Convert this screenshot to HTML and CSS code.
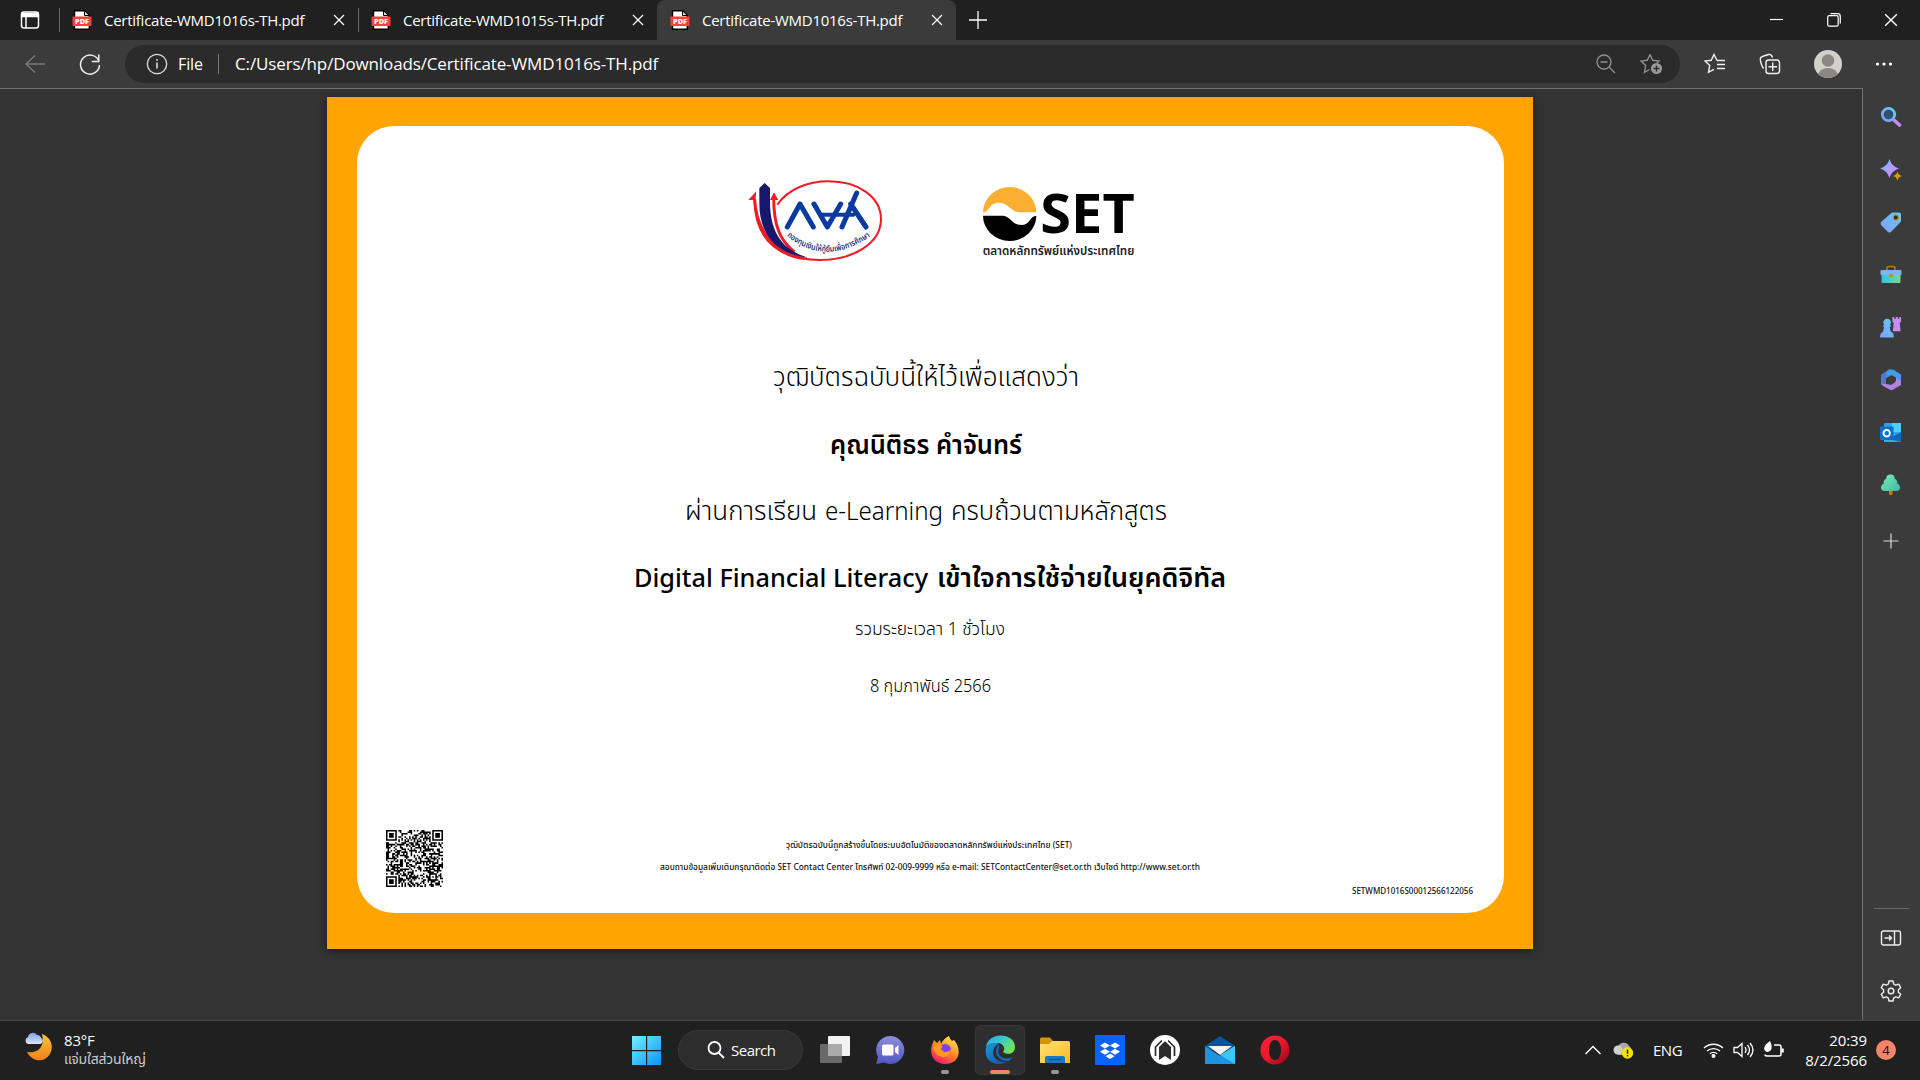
FILE: index.html
```html
<!DOCTYPE html>
<html lang="th">
<head>
<meta charset="utf-8">
<title>Certificate-WMD1016s-TH.pdf</title>
<link rel="stylesheet" href="styles.css">
</head>
<body>
<svg class="defs" width="0" height="0">
  <defs>
    <linearGradient id="blueViolet" x1="0" y1="0" x2="1" y2="1"><stop offset="0" stop-color="#4fc3f7"/><stop offset=".5" stop-color="#b49cff"/><stop offset="1" stop-color="#d08af5"/></linearGradient>
    <linearGradient id="sky" x1="1" y1="0" x2="0" y2="1"><stop offset="0" stop-color="#62cdf5"/><stop offset="1" stop-color="#7f9bff"/></linearGradient>
    <linearGradient id="win" x1="0" y1="0" x2="1" y2="1"><stop offset="0" stop-color="#72f0ff"/><stop offset="1" stop-color="#0a95f5"/></linearGradient>
    <linearGradient id="mint" x1="0" y1="0" x2="1" y2="1"><stop offset="0" stop-color="#7df0c0"/><stop offset="1" stop-color="#3eb5a0"/></linearGradient>
    <linearGradient id="box" x1="0" y1="0" x2="1" y2="0"><stop offset="0" stop-color="#2bc5e8"/><stop offset="1" stop-color="#77d98a"/></linearGradient>
    <linearGradient id="edgeTop" x1="0" y1="0" x2="1" y2=".5"><stop offset="0" stop-color="#2fa9e6"/><stop offset=".5" stop-color="#36c6cf"/><stop offset="1" stop-color="#6ee557"/></linearGradient>
    <linearGradient id="edgeLow" x1="0" y1="0" x2="1" y2="1"><stop offset="0" stop-color="#1b9be6"/><stop offset="1" stop-color="#0b4a9c"/></linearGradient>
    <linearGradient id="fire" x1=".8" y1="0" x2=".2" y2="1"><stop offset="0" stop-color="#fff04a"/><stop offset=".45" stop-color="#ff9020"/><stop offset=".8" stop-color="#ff3b50"/><stop offset="1" stop-color="#e2107e"/></linearGradient>
    <linearGradient id="moon" x1="0" y1="0" x2="0" y2="1"><stop offset="0" stop-color="#f8c63a"/><stop offset="1" stop-color="#f07f1a"/></linearGradient>
    <linearGradient id="cloud" x1="0" y1="0" x2="0" y2="1"><stop offset="0" stop-color="#7fa3e0"/><stop offset="1" stop-color="#dbe6fb"/></linearGradient>
    <linearGradient id="chat" x1="0" y1="0" x2="0" y2="1"><stop offset="0" stop-color="#8c8ed8"/><stop offset="1" stop-color="#5256c6"/></linearGradient>
    <linearGradient id="opera" x1="0" y1="0" x2="1" y2="1"><stop offset="0" stop-color="#ff2138"/><stop offset=".5" stop-color="#e8192c"/><stop offset="1" stop-color="#8c0510"/></linearGradient>
    <linearGradient id="folder" x1="0" y1="0" x2="1" y2="1"><stop offset="0" stop-color="#ffe27a"/><stop offset="1" stop-color="#fdbb1c"/></linearGradient>
    <symbol id="pdf" viewBox="0 0 20 20"><path d="M2.5.7h10L17.3 5.500v13.800H2.500z" fill="#fff" stroke="#000" stroke-width="1.400"/><path d="M12.500.7v4.800h4.800z" fill="#ddd" stroke="#000"/><rect x=".5" y="6.500" width="19" height="9.500" rx="1" fill="#f8403e"/><text x="10" y="13.700" text-anchor="middle" textLength="14" lengthAdjust="spacingAndGlyphs" font-size="6.800" font-weight="800" fill="#fff">PDF</text></symbol>
    <symbol id="x" viewBox="0 0 12 12"><path d="M1 1l10 10M11 1L1 11" stroke="#fff" stroke-width="1.200"/></symbol>
  </defs>
</svg>

<header class="tabs">
  <div class="tab-menu"><svg width="20" height="20" viewBox="0 0 20 20" fill="none" stroke="#fff" stroke-width="1.500"><rect x="1.500" y="2" width="17" height="16" rx="2.500"/><path d="M2 3.500h16v3H2z" fill="#fff"/><path d="M6 6v12"/></svg></div>
  <div class="tab sep"><svg class="pdf"><use href="#pdf"/></svg><span class="tab-title">Certificate-WMD1016s-TH.pdf</span><svg class="close"><use href="#x"/></svg></div>
  <div class="tab sep"><svg class="pdf"><use href="#pdf"/></svg><span class="tab-title">Certificate-WMD1015s-TH.pdf</span><svg class="close"><use href="#x"/></svg></div>
  <div class="tab active"><svg class="pdf"><use href="#pdf"/></svg><span class="tab-title">Certificate-WMD1016s-TH.pdf</span><svg class="close"><use href="#x"/></svg></div>
  <div class="new-tab"><svg width="18" height="18" viewBox="0 0 18 18"><path d="M0 9h18M9 0v18" stroke="#fff" stroke-width="1.300"/></svg></div>
  <div class="window-controls">
    <svg width="14" height="14"><path d="M0 6.500h13" stroke="#fff" stroke-width="1.200"/></svg>
    <svg width="14" height="14" fill="none" stroke="#fff" stroke-width="1.200"><rect x=".7" y="2.700" width="10.500" height="10.500" rx="1.500"/><path d="M3.500.7h7q2.800 0 2.800 2.800v7"/></svg>
    <svg width="14" height="14" viewBox="0 0 12 12"><use href="#x"/></svg>
  </div>
</header>

<nav class="toolbar">
  <svg class="back" width="20" height="18" viewBox="0 0 20 18" fill="none" stroke="#7a7a7a" stroke-width="1.400"><path d="M20 9H1M10 .5L1 9l9 8.500"/></svg>
  <svg class="reload" width="22" height="22" viewBox="0 0 22 22" fill="none" stroke="#eee" stroke-width="1.500"><path d="M20 8.500A9.500 9.500 0 1 0 20.500 12M19.800 1.500v7h-7"/></svg>
  <div class="address">
    <svg width="22" height="22" viewBox="0 0 22 22" fill="none" stroke="#ddd" stroke-width="1.300"><circle cx="11" cy="11" r="9.700"/><path d="M11 9.500v6M11 6v1.700" stroke-width="1.600"/></svg>
    <span class="scheme">File</span><i class="bar"></i><span class="url">C:/Users/hp/Downloads/Certificate-WMD1016s-TH.pdf</span>
    <div class="address-actions">
      <svg width="20" height="20" fill="none" stroke="#8f8f8f" stroke-width="1.400"><circle cx="8" cy="8" r="7"/><path d="M4.500 8h7M13 13l6 6"/></svg>
      <svg width="24" height="22" fill="none" stroke="#8f8f8f" stroke-width="1.400"><path d="M10 1.500l2.700 5.800 6.300.8-2 2M10 1.500L7.300 7.300 1 8l4.700 4.500-1.200 6.800 5-2.800"/><circle cx="16.500" cy="15.500" r="5.500" fill="#999" stroke="none"/><path d="M13.500 15.500h6M16.500 12.500v6" stroke="#2b2b2b"/></svg>
    </div>
  </div>
  <div class="actions">
    <svg width="22" height="22" fill="none" stroke="#f2f2f2" stroke-width="1.400"><path d="M13 7.500L10 1.500 7.200 7.300 1 8l4.700 4.500-1.200 6.800 5.500-3M13 7.500h8M13 11.500h8M13 15.500h8"/></svg>
    <svg width="22" height="22" fill="none" stroke="#f2f2f2" stroke-width="1.400"><path d="M4.500 15.500C2 12 1 7 1.500 5Q2 3.500 9.500 1.500q3-.7 4 3"/><rect x="7" y="7" width="13.500" height="13.500" rx="2.500"/><path d="M9.500 13.700h8.500M13.700 9.500V18"/></svg>
    <svg width="28" height="28"><defs><clipPath id="av"><circle cx="14" cy="14" r="14"/></clipPath></defs><g clip-path="url(#av)"><path d="M0 0h28v28H0z" fill="#d3d1ce"/><circle cx="14" cy="10.500" r="6.200" fill="#8a8784"/><ellipse cx="14" cy="26" rx="10" ry="8" fill="#8a8784"/></g></svg>
    <svg width="18" height="6" fill="#fff"><circle cx="2.500" cy="3" r="1.600"/><circle cx="9" cy="3" r="1.600"/><circle cx="15.500" cy="3" r="1.600"/></svg>
  </div>
</nav>

<div class="workspace">
<main class="viewer">
  <article class="certificate">
    <svg class="logos" width="440" height="120" viewBox="0 0 1320 360">
      <g fill="none" stroke="#ee1c25">
        <path d="M172 134C205 86 265 64 325 64c90 0 158 46 158 114 0 72-83 122-183 122C160 298 103 230 103 112" stroke-width="6"/>
        <path d="M161 112c0 85 18 128 62 164" stroke-width="9"/>
        <path d="M104 118c4 90 60 170 150 177" stroke-width="9"/>
      </g>
      <path d="M85 120l24-26-3 26zM150 120l12-23 13 23z" fill="#ee1c25"/>
      <path d="M118 84l16-15 16 15v40c0 85 30 145 115 169C165 284 118 220 118 130z" fill="#17176e"/>
      <g fill="none" stroke="#0b3ba0" stroke-width="15" stroke-linecap="round" stroke-linejoin="round"><path d="M202 201l38-69 40 69M282 132l40 69 40-69M366 201L410 99M392 132l46 69"/><path d="M304 164h96" stroke-width="12"/></g>
      <path id="arc" d="M200 228Q318 322 452 228" fill="none"/>
      <text class="thai" font-size="25" font-weight="600" fill="#1d2f78"><textPath href="#arc" textLength="272" lengthAdjust="spacingAndGlyphs">กองทุนเงินให้กู้ยืมเพื่อการศึกษา</textPath></text>
      <path d="M789 157A80 76 0 0 1 949 157H900C874 157 866 128 836 128 807 128 808 157 789 157z" fill="#fbb034"/>
      <path d="M789 167A80 76 0 0 0 949 167C930 168 930 195 904 195 876 195 870 167 848 167z" fill="#000"/>
      <text x="961" y="219" class="ui" font-size="162" font-weight="700" textLength="283" lengthAdjust="spacingAndGlyphs">SET</text>
      <text x="788" y="285" class="thai" font-size="39" font-weight="600" fill="#222" textLength="455" lengthAdjust="spacingAndGlyphs">ตลาดหลักทรัพย์แห่งประเทศไทย</text>
    </svg>
    <svg class="line" height="67" viewBox="357 346 1147 67"><text x="773" y="386" font-size="27" textLength="306" lengthAdjust="spacingAndGlyphs">วุฒิบัตรฉบับนี้ให้ไว้เพื่อแสดงว่า</text></svg>
    <svg class="line bold" height="67" viewBox="357 413 1147 67"><text x="830" y="454" font-size="27" textLength="192" lengthAdjust="spacingAndGlyphs">คุณนิติธร คำจันทร์</text></svg>
    <svg class="line" height="67" viewBox="357 480 1147 67"><text x="685" y="520" font-size="27" textLength="132" lengthAdjust="spacingAndGlyphs">ผ่านการเรียน</text><text x="825" y="520" font-size="25" textLength="118" lengthAdjust="spacingAndGlyphs">e-Learning</text><text x="951" y="520" font-size="27" textLength="216" lengthAdjust="spacingAndGlyphs">ครบถ้วนตามหลักสูตร</text></svg>
    <svg class="line bold" height="66" viewBox="357 547 1147 66"><text class="latin" x="634" y="587" font-size="25" textLength="294" lengthAdjust="spacingAndGlyphs">Digital Financial Literacy</text><text x="937" y="587" font-size="27" textLength="289" lengthAdjust="spacingAndGlyphs">เข้าใจการใช้จ่ายในยุคดิจิทัล</text></svg>
    <svg class="line" height="47" viewBox="357 613 1147 47"><text x="855" y="635" font-size="17.500" textLength="150" lengthAdjust="spacingAndGlyphs">รวมระยะเวลา 1 ชั่วโมง</text></svg>
    <svg class="line" height="60" viewBox="357 660 1147 60"><text x="870" y="692" font-size="17.500" textLength="121" lengthAdjust="spacingAndGlyphs">8 กุมภาพันธ์ 2566</text></svg>
    <footer class="cert-footer">
      <svg id="qr" width="57" height="57" viewBox="0 0 37 37"></svg>
      <svg class="small" width="1030" height="80" viewBox="443 830 1030 80">
        <text x="786" y="848" textLength="286" lengthAdjust="spacingAndGlyphs">วุฒิบัตรฉบับนี้ถูกสร้างขึ้นโดยระบบอัตโนมัติของตลาดหลักทรัพย์แห่งประเทศไทย (SET)</text>
        <text x="660" y="870" textLength="540" lengthAdjust="spacingAndGlyphs">สอบถามข้อมูลเพิ่มเติมกรุณาติดต่อ SET Contact Center โทรศัพท์ 02-009-9999 หรือ e-mail: SETContactCenter@set.or.th เว็บไซต์ http://www.set.or.th</text>
        <text x="1352" y="894" textLength="121" lengthAdjust="spacingAndGlyphs">SETWMD1016S00012566122056</text>
      </svg>
    </footer>
  </article>
</main>
<aside class="sidebar">
  <svg viewBox="0 0 22 22"><circle cx="8.500" cy="8.500" r="6.200" fill="#31506c" stroke="url(#sky)" stroke-width="2.800"/><path d="M14.500 14.500l5 4.500" stroke="#c58af4" stroke-width="3.600" stroke-linecap="round"/></svg>
  <svg viewBox="0 0 22 22"><path d="M9.500 0c2 5.500 4 7.500 9.500 9.500-5.500 2-7.500 4-9.500 9.500C7.500 13.500 5.500 11.500 0 9.500 5.500 7.500 7.500 5.500 9.500 0z" fill="url(#blueViolet)"/><path d="M17.500 12.500c.9 2.700 1.800 3.600 4.500 4.500-2.700.9-3.600 1.800-4.500 4.500-.9-2.700-1.800-3.600-4.500-4.500 2.700-.9 3.600-1.800 4.500-4.500z" fill="#d69a12"/></svg>
  <svg viewBox="0 0 22 22"><path d="M12 1.500h7q2 0 2 2v7L11 21q-1.500 1-3 0L1 14q-1-1.500 0-3z" fill="url(#sky)"/><circle cx="15.800" cy="6.500" r="2.500" fill="#3d2a00" stroke="#c8860a" stroke-width="1.200"/></svg>
  <svg viewBox="0 0 22 22"><path d="M7 7V4.500q0-2 2-2h4q2 0 2 2V7" fill="none" stroke="#b87b0a" stroke-width="1.600"/><rect x="1.500" y="9" width="19" height="10" rx="1" fill="url(#box)"/><rect x=".5" y="6" width="21" height="5" rx="1" fill="#7db4f7"/><circle cx="11" cy="11.500" r="2" fill="#c98d10"/></svg>
  <svg viewBox="0 0 24 24"><path d="M13.500 1h2v2h1.700V1h2.300v2h1.700V1H23v5l-1.500 2 1 8.500H14L15 8l-1.500-2z" fill="#c98df0"/><path d="M8 3a4 4 0 0 1 3 6.500l1.500 2h-2l1 5.500c3 1.500 3.500 3 3.500 6.500H0c0-3.500 1-5 3.500-6.500l1-5.500h-2L4.500 9.500A4 4 0 0 1 8 3z" fill="url(#sky)"/></svg>
  <svg viewBox="0 0 22 22"><path d="M9 .5L1 5.500v10l5 3V9l8-4.500z" fill="#5573cf"/><path d="M9 .5h4l8 5V15l-5-3V8.500L11 6 6 9V4z" fill="#3f9cea"/><path d="M21 12v4l-9.500 5.500L4 17.500l-3-3 9 1 6-3.500V8.500z" fill="#b083dc"/><path d="M8 9l3-2 4 2.200v4.300L11 16l-3.500-2z" fill="#3b3b3b"/></svg>
  <svg viewBox="0 0 22 22"><rect x="4" y="1" width="17" height="19" rx="1" fill="#2aa5ea"/><path d="M12 1h9v9h-9z" fill="#4fd0f8"/><path d="M4 20l17-10v10z" fill="#0f69b8"/><path d="M4 16l17 4H4z" fill="#33aef0"/><rect x="0" y="4.500" width="13.500" height="13.500" rx="1" fill="#0871cc"/><circle cx="6.700" cy="11.200" r="3.200" fill="none" stroke="#fff" stroke-width="1.900"/></svg>
  <svg viewBox="0 0 22 22"><rect x="9" y="14" width="3.500" height="7" rx="1" fill="#b97b12"/><path d="M10.500.5c3 0 4.500 2 4 4 2.500 1 3.300 3 2.500 5 4 1 4.500 7 0 7.500H4c-4-.5-4-6 0-7.500-.8-2 0-4 2.500-5-.5-2 1-4 4-4z" fill="url(#mint)"/></svg>
  <svg class="add" viewBox="0 0 22 22"><path d="M3.500 11h15M11 3.500v15" stroke="#ddd" stroke-width="1.200"/></svg>
  <div class="sidebar-end">
    <svg viewBox="0 0 22 22" fill="none" stroke="#eee" stroke-width="1.400"><rect x="1.500" y="4" width="19" height="14" rx="2"/><path d="M14.500 4v14M4.500 11h7M9 8.500l2.500 2.500L9 13.500"/></svg>
    <svg viewBox="0 0 22 22" fill="none" stroke="#eee" stroke-width="1.400"><path d="M9 1h4l.7 3 2 1.200 3-1 2 3.500-2.300 2.100v2.400l2.300 2.100-2 3.500-3-1-2 1.200-.7 3H9l-.7-3-2-1.200-3 1-2-3.500 2.300-2.100V9.800L1.300 7.700l2-3.500 3 1 2-1.200z" stroke-linejoin="round"/><circle cx="11" cy="11" r="2.800"/></svg>
  </div>
</aside>
</div>

<div class="taskbar">
  <div class="weather">
    <svg width="30" height="30" viewBox="0 0 30 30"><path d="M18 2c12 4 13 19 3 25-6 3-14 1-18-7 12 2 18-6 15-18z" fill="url(#moon)"/><path d="M4 12a3.700 3.700 0 0 1 0-7 5 5 0 0 1 9-2c3 0 4 2 4 3 3 1 2 6-1 6z" fill="url(#cloud)"/></svg>
    <div><span class="temp">83°F</span><span class="cond thai">แจ่มใสส่วนใหญ่</span></div>
  </div>
  <div class="apps">
    <svg class="start" width="29" height="29" fill="url(#win)"><path d="M0 0h14v14H0zM15.200 0H29v14H15.200zM0 15.200h14V29H0zM15.200 15.200H29V29H15.200z"/></svg>
    <div class="search"><svg width="18" height="18" fill="none" stroke="#fff" stroke-width="1.800"><circle cx="7.500" cy="7" r="6"/><path d="M11.500 11.500l5.500 5.500"/></svg><span>Search</span></div>
    <div class="app"><svg viewBox="0 0 30 30"><rect x="8" y="1" width="22" height="20" rx="1" fill="#f2f2f2"/><rect x="0" y="9" width="22" height="19" rx="1" fill="#777" opacity=".85"/><path d="M8 9h14v12H8z" fill="#aaa"/></svg></div>
    <div class="app"><svg viewBox="0 0 30 30"><path d="M15 1a14 14 0 1 1-6 26.500L1 29l2-7A14 14 0 0 1 15 1z" fill="url(#chat)"/><rect x="7" y="9.500" width="11.500" height="11" rx="1.500" fill="#fff"/><path d="M20 13l3.500-3v10L20 17z" fill="#fff"/></svg></div>
    <div class="app running"><svg viewBox="0 0 30 30"><path d="M19 1c1 3 2 4 3 5l2-1c8 9 6 24-9 24C4 29-1 20 2 10l2-5 3 3 3-3 1 4c2-4 4-6 8-8z" fill="url(#fire)"/><circle cx="15" cy="15" r="6" fill="#7b3ff2"/><path d="M3 12c4-3 7-3 10 0-3 0-2 4 2 5 3 0 5-1 6-3 0 6-4 8-8 8-5 0-9-4-10-10z" fill="#ff9a1f"/></svg></div>
    <div class="app current"><svg viewBox="0 0 30 30"><path d="M1 13C2-4 30-3 30 12c0 8-9 8-12 5 2-2 2-8-5-9C7 7.500 3 9 1 13z" fill="url(#edgeTop)"/><path d="M1 13c3-5 9-6 13-4-4 1-6 5-6 8 0 8 9 12 16 9C14 33-2 28 1 13z" fill="url(#edgeLow)"/><path d="M14 9.500C8 14 11 27 24 26l4-4c-9 4-17-1-14-9z" fill="#1368bd"/></svg></div>
    <div class="app running"><svg viewBox="0 0 30 30"><path d="M0 4q0-1.500 1.500-1.500H10L13 6v5H0z" fill="#d99308"/><path d="M0 9h9l3-3h16.500Q30 6 30 7.500V28H0z" fill="url(#folder)"/><path d="M5 28v-5q0-2 2-2h16q2 0 2 2v5z" fill="#167ac9"/><path d="M9 24.500h12" stroke="#0a4d90" stroke-width="1.200"/></svg></div>
    <div class="app"><svg viewBox="0 0 30 30"><path d="M0 0h30v30H0z" fill="#0a62ff"/><path d="M10 7.500l5 3-5 3-5-3zM20 7.500l5 3-5 3-5-3zM10 13.800l5 3-5 3-5-3zM20 13.800l5 3-5 3-5-3zM15 18.500l4.500 2.700-4.500 2.700-4.500-2.700z" fill="#fff"/></svg></div>
    <div class="app"><svg viewBox="0 0 30 30"><circle cx="15" cy="15" r="15" fill="#fff"/><path d="M5.500 21v-9L12 5.500M24.500 21v-9L18 5.500" fill="none" stroke="#2a2a2a" stroke-width="1.700"/><path d="M9 25V12l6-6 6 6v13l-6-4z" fill="#2a2a2a"/><path d="M12 4l3 3 3-3v4l-3-2-3 2z" fill="#fff"/></svg></div>
    <div class="app"><svg viewBox="0 0 30 30"><path d="M0 11L15 1l15 10v4H0z" fill="#0b5299"/><path d="M0 11l15 10 15-10v18H0z" fill="#1b94e2"/><path d="M30 11v18L15 20z" fill="#3cc6f5"/><path d="M3 11h24L15 20z" fill="#f3f3f3"/></svg></div>
    <div class="app"><svg viewBox="0 0 30 30"><path fill-rule="evenodd" d="M15 .5a14.500 14.500 0 1 0 0 29 14.500 14.500 0 0 0 0-29zm0 4.500c4 0 6 4.500 6 10s-2 10-6 10-6-4.500-6-10 2-10 6-10z" fill="url(#opera)"/></svg></div>
  </div>
  <div class="tray">
    <svg width="16" height="10" fill="none" stroke="#fff" stroke-width="1.400"><path d="M.5 9L8 1.500 15.500 9"/></svg>
    <svg class="sync" width="21" height="18"><path d="M5 14a5 5 0 0 1 0-8A6 6 0 0 1 16 5c3 1 3 9-1 9z" fill="#a9a9a9"/><circle cx="5" cy="9" r="4.500" fill="#d0d0d0"/><circle cx="14.500" cy="12" r="5.700" fill="#fbe106"/><path d="M14.500 8.500v4.300M14.500 14v1.600" stroke="#222" stroke-width="1.500"/></svg>
    <span class="lang">ENG</span>
    <svg class="wifi" width="21" height="16" fill="none" stroke="#fff" stroke-width="1.400"><path d="M1 6a14 14 0 0 1 19 0M4 9a10 10 0 0 1 13 0M6.800 11.800a6 6 0 0 1 7.400 0"/><circle cx="10.500" cy="14" r="1.300" fill="#fff"/></svg>
    <svg class="sound" width="21" height="18" fill="none" stroke="#fff" stroke-width="1.300"><path d="M1 6.500h3.500L9 2.500v13l-4.500-4H1zM12 6q2 3 0 6M14.500 4q4 5 0 10M17 2q6 7 0 14"/></svg>
    <svg class="battery" width="22" height="18" fill="none" stroke="#fff" stroke-width="1.500"><path d="M11 4h5q2 0 2 2v7q0 2-2 2H4q-2 0-2-1.500"/><path d="M19.500 7.500v4" stroke-width="2.500"/><path d="M7 0c3 6 2 11-3 11C-1 9 1 4 7 0zM3 12.500L6 7" fill="#fff" stroke="none"/></svg>
    <div class="clock"><span>20:39</span><span class="date">8/2/2566</span></div>
    <span class="badge">4</span>
  </div>
</div>
<script src="script.js"></script>
</body>
</html>
```
FILE: styles.css
```css
* { box-sizing: border-box; }
body { margin: 0; width: 1920px; height: 1080px; overflow: hidden; display: flex; flex-direction: column; background: #333; color: #fff; font-family: "Open Sans", "Noto Sans", sans-serif; font-size: 15px; }
svg { display: block; flex: none; }
.defs { position: absolute; }
span { white-space: nowrap; }
.ui { font-family: "Noto Sans", sans-serif; }
.thai { font-family: "Noto Sans Thai", "Noto Sans", sans-serif; }

.tabs { display: flex; height: 40px; background: #202020; }
.tab-menu { width: 59px; padding: 10px 0 0 20px; }
.tab { display: flex; align-items: center; width: 299px; padding-left: 13px; position: relative; }
.tab.sep::before { content: ""; position: absolute; left: 0; top: 8px; width: 1px; height: 24px; background: #666; }
.tab.active { background: #3b3b3b; border-radius: 8px 8px 0 0; }
.pdf { width: 20px; height: 20px; }
.tab-title { width: 229px; margin-left: 12px; padding-bottom: 1px; font-size: 15px; letter-spacing: -.26px; }
.close { width: 12px; height: 12px; }
.new-tab { padding: 11px 0 0 13px; }
.window-controls { display: flex; align-items: center; gap: 43px; margin-left: auto; padding-right: 22px; }

.toolbar { display: flex; align-items: center; height: 48px; background: #3b3b3b; }
.back { margin-left: 25px; }
.reload { margin-left: 34px; }
.address { display: flex; align-items: center; width: 1555px; height: 38px; margin-left: 24px; padding-left: 21px; border-radius: 19px; background: #2b2b2b; font-size: 17px; letter-spacing: -.13px; }
.scheme { width: 40px; margin-left: 10px; font-size: 16px; }
.bar { width: 1px; height: 20px; background: #777; }
.url { margin-left: 16px; }
.scheme, .url { padding-bottom: 1px; }
.address-actions { display: flex; gap: 24px; margin-left: auto; padding-right: 16px; align-items: center; }
.actions { display: flex; align-items: center; padding-left: 24px; }
.actions svg + svg { margin-left: 33px; }

.workspace { display: flex; height: 932px; }
.viewer { width: 1863px; padding: 8px 0 0 327px; border-top: 1px solid #707070; border-right: 1px solid #707070; background: #333; }
.certificate { width: 1206px; height: 852px; border: solid #ffa400; border-width: 29px 29px 36px 30px; background: #ffa400; box-shadow: 0 2px 7px #1c1c1c; display: flex; flex-direction: column; position: relative; z-index: 0; }
.certificate::before { content: ""; position: absolute; inset: 0; border-radius: 37px; background: #fff; z-index: -1; }
.logos { margin: 34px 0 66px 363px; }
.line { width: 1147px; overflow: visible; fill: #000; font-family: "Noto Sans", "Noto Sans Thai", sans-serif; font-weight: 300; }
.line.bold { font-weight: 600; }
.line .latin { font-weight: 500; }
.cert-footer { display: flex; padding: 110px 0 0 29px; }
.small { font: 500 8.500px "Noto Sans", "Noto Sans Thai", sans-serif; fill: #111; }

.sidebar { display: flex; flex-direction: column; align-items: center; width: 57px; padding: 18px 1px 0 0; gap: 30.6px; background: #3b3b3b; }
.sidebar svg { width: 22px; height: 22px; }
.sidebar .add { margin-top: 3px; }
.sidebar-end { width: 35px; margin-top: auto; border-top: 1px solid #6a6a6a; padding: 18px 0 18px 6px; display: flex; flex-direction: column; gap: 31px; }

.taskbar { display: flex; height: 60px; border-top: 1px solid #454545; background: #202020; }
.weather { display: flex; width: 632px; padding: 11px 0 0 24px; }
.weather div { display: flex; flex-direction: column; margin: -1px 0 0 10px; }
.weather span { height: 20px; line-height: 18px; font-size: 15px; letter-spacing: -.2px; }
.weather .cond { color: #ccc; font-size: 14px; }
.apps { display: flex; align-items: center; height: 58px; }
.search { display: flex; align-items: center; width: 125px; height: 40px; margin: 0 5px 0 17px; padding-left: 28px; border: 1px solid #393939; border-radius: 20px; background: #2d2d2d; }
.search span { margin-left: 6px; font-size: 15px; letter-spacing: -.5px; }
.app { display: flex; justify-content: center; align-items: center; width: 50px; height: 50px; margin-right: 5px; border: 1px solid transparent; border-radius: 5px; position: relative; }
.app:nth-child(3) { margin-left: 2px; }
.app svg { width: 30px; height: 30px; }
.app.current { background: #2e2e2e; border-color: #373737; }
.app.running::after, .app.current::after { content: ""; position: absolute; bottom: 0; width: 8px; height: 4px; border-radius: 2px; background: #999; }
.app.current::after { width: 20px; background: #f4846a; }
.tray { display: flex; align-items: center; height: 58px; margin-left: auto; padding-right: 24px; }
.sync { margin-left: 12px; }
.lang { width: 50px; margin-left: 19px; font-size: 15px; letter-spacing: -.5px; }
.sound { margin-left: 9px; }
.battery { margin-left: 9px; }
.clock { display: flex; flex-direction: column; width: 82px; text-align: right; line-height: 20px; font-size: 15px; letter-spacing: -.1px; }
.badge { width: 20px; height: 20px; margin-left: 9px; border-radius: 50%; background: #f4846a; color: #111; font-size: 13px; line-height: 20px; text-align: center; }
```
FILE: script.js
```js
// Fills the code symbol module by module: finder squares, timing rows, then data cells.
(function () {
  var n = 37, d = '', seed = 2566;
  function finder(x, y) {
    var corners = [[0, 0], [n - 7, 0], [0, n - 7]];
    for (var i = 0; i < 3; i++) {
      var u = x - corners[i][0], v = y - corners[i][1];
      if (u >= -1 && u <= 7 && v >= -1 && v <= 7) {
        var r = Math.max(Math.abs(u - 3), Math.abs(v - 3));
        return r === 3 || r <= 1 ? 1 : 0;
      }
    }
    var a = Math.max(Math.abs(x - 30), Math.abs(y - 30));
    if (a <= 2) return a === 1 ? 0 : 1;
    if (x === 6 || y === 6) return (x + y) % 2 ? 0 : 1;
    return -1;
  }
  for (var y = 0; y < n; y++) for (var x = 0; x < n; x++) {
    seed = (seed * 1103515245 + 12345) % 2147483648;
    var f = finder(x, y);
    if (f === 1 || (f === -1 && (seed >> 16) % 100 < 52)) d += 'M' + x + ' ' + y + 'h1v1h-1z';
  }
  var p = document.createElementNS('http://www.w3.org/2000/svg', 'path');
  p.setAttribute('d', d);
  document.getElementById('qr').appendChild(p);
})();
```
